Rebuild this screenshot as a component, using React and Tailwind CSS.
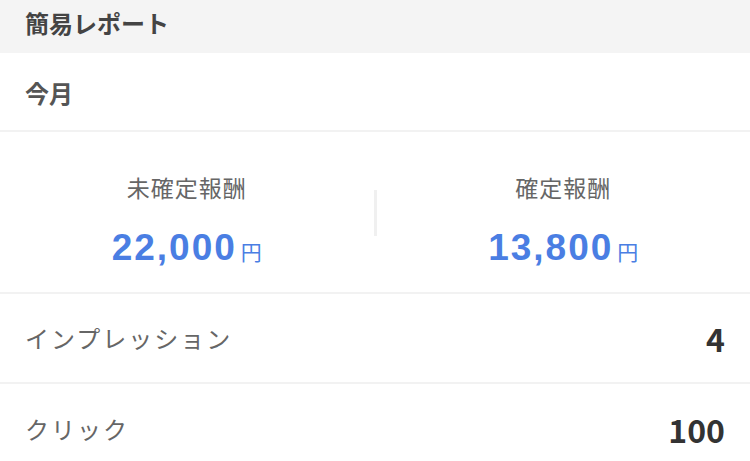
export default function App() {
  const font = { fontFamily: '"Noto Sans CJK JP", "Noto Sans", sans-serif' };
  const num = { fontFamily: '"Liberation Sans", Arial, sans-serif' };
  return (
    <div className="w-[750px] h-[461px] overflow-hidden bg-white" style={font}>
      <div className="h-[53px] bg-[#f4f4f4] px-[25px] flex items-center">
        <span className="text-[24px] font-bold text-[#444] leading-none -mt-[8px]">簡易レポート</span>
      </div>
      <div className="h-[79px] px-[25px] flex items-center border-b-2 border-[#f2f2f2]">
        <span className="text-[24px] font-bold text-[#555] leading-none mt-[2px]">今月</span>
      </div>
      <div className="h-[162px] flex items-start border-b-2 border-[#f2f2f2]">
        <div className="flex-1 flex flex-col items-center pt-[44px]">
          <span className="text-[23px] text-[#666] leading-none tracking-[1px]">未確定報酬</span>
          <div className="mt-[30px] flex items-baseline text-[#4a7ee3]">
            <span className="text-[37px] font-bold leading-none tracking-[2px]" style={num}>22,000</span>
            <span className="text-[21px] ml-[4px] leading-none">円</span>
          </div>
        </div>
        <div className="w-[3px] h-[46px] mt-[58px] bg-[#f0f0f0]" />
        <div className="flex-1 flex flex-col items-center pt-[44px]">
          <span className="text-[23px] text-[#666] leading-none tracking-[1px]">確定報酬</span>
          <div className="mt-[30px] flex items-baseline text-[#4a7ee3]">
            <span className="text-[37px] font-bold leading-none tracking-[2px]" style={num}>13,800</span>
            <span className="text-[21px] ml-[4px] leading-none">円</span>
          </div>
        </div>
      </div>
      <div className="h-[90px] px-[25px] flex items-center justify-between border-b-2 border-[#f2f2f2]">
        <span className="text-[24px] text-[#666] leading-none tracking-[2px]">インプレッション</span>
        <span className="text-[32px] font-bold text-[#333] leading-none">4</span>
      </div>
      <div className="h-[90px] px-[25px] flex items-center justify-between">
        <span className="text-[24px] text-[#666] leading-none tracking-[2px]">クリック</span>
        <span className="text-[32px] font-bold text-[#333] leading-none">100</span>
      </div>
    </div>
  );
}
